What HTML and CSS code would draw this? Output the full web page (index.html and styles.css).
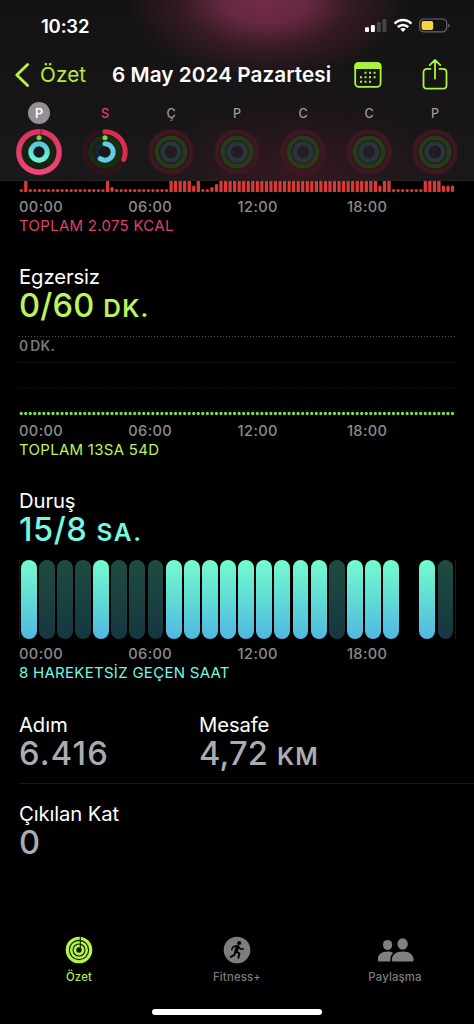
FILE: index.html
```html
<!DOCTYPE html>
<html lang="tr">
<head>
<meta charset="utf-8">
<title>Özet</title>
<link rel="stylesheet" href="styles.css">
</head>
<body>
<div class="screen">
  <header class="header">
    <div class="status">
      <span class="clock">10:32</span>
      <svg class="status-icons" width="86" height="16" viewBox="0 0 86 16">
        <g fill="#fff"><rect x="0" y="9.3" width="4" height="4.7" rx="1"/><rect x="5.9" y="7" width="4" height="7" rx="1"/></g>
        <g fill="#454547"><rect x="11.8" y="4" width="4" height="10" rx="1"/><rect x="17.4" y="1" width="4" height="13" rx="1"/></g>
        <g fill="none" stroke="#fff" stroke-width="2.5"><path d="M29.6 5.7C34.3 .9 41.7 .9 46.4 5.7"/><path d="M32.8 9.1C35.8 6.2 40.2 6.2 43.2 9.1"/></g>
        <path d="M38 14l-2.8-3C36.8 9.7 39.2 9.7 40.8 11z" fill="#fff"/>
        <rect x="54.7" y="1" width="27" height="12.8" rx="4" fill="none" stroke="#69696b" stroke-width="1.2"/>
        <rect x="56.6" y="2.9" width="11.6" height="9" rx="2" fill="#f6d442"/>
        <path d="M83.2 5.3c2 .8 2 3.5 0 4.3z" fill="#69696b"/>
      </svg>
    </div>
    <nav class="nav">
      <svg class="back-icon" width="16" height="26" viewBox="0 0 16 26"><path d="M13.6 2.5L2.8 13L13.6 23.5" fill="none" stroke="#b4f43f" stroke-width="2.9" stroke-linecap="round" stroke-linejoin="round"/></svg>
      <span class="back">Özet</span>
      <span class="date">6 May 2024 Pazartesi</span>
      <svg class="calendar" width="28" height="28" viewBox="0 0 28 28">
        <rect x="1.2" y="2.2" width="25.4" height="23.6" rx="3.6" fill="none" stroke="#aaf33f" stroke-width="1.8"/>
        <path d="M.4 8V5Q.4 1.3 4.2 1.3H23.6Q27.4 1.3 27.4 5V8z" fill="#aaf33f"/>
        <g fill="#aaf33f"><path d="M10.5 10.7h2v2h-2zM15 10.7h2v2h-2zM19.6 10.7h2v2h-2zM6 15.2h2v2H6zM10.5 15.2h2v2h-2zM15 15.2h2v2h-2zM19.6 15.2h2v2h-2zM6 19.7h2v2H6zM10.5 19.7h2v2h-2zM15 19.7h2v2h-2z"/></g>
      </svg>
      <svg class="share" width="26" height="34" viewBox="0 0 26 34">
        <path d="M8.5 10.9H5Q1.5 10.9 1.5 14.4V27.2Q1.5 30.7 5 30.7H21Q24.5 30.7 24.5 27.2V14.4Q24.5 10.9 21 10.9H17.5M13 20.5V2.2M7.7 7.2L13 1.9L18.3 7.2" fill="none" stroke="#aaf33f" stroke-width="1.8" stroke-linecap="round" stroke-linejoin="round"/>
      </svg>
    </nav>
    <div class="week" id="week"></div>
  </header>

  <main class="content">
    <section class="metric move">
      <svg class="move-chart" id="moveChart" width="474" height="11"></svg>
      <div class="hours"><span>00:00</span><span>06:00</span><span>12:00</span><span>18:00</span></div>
      <p class="total">TOPLAM 2.075 KCAL</p>
    </section>

    <section class="metric exercise">
      <h2 class="label">Egzersiz</h2>
      <p class="value">0/60 <span class="unit">DK.</span></p>
      <div class="exercise-plot">
        <svg class="lines" width="474" height="80">
          <g fill="none" stroke-dasharray="1 2"><path d="M19 .5H455" stroke="#545454"/><path d="M19 26.5H455" stroke="#272727"/><path d="M19 52.5H455" stroke="#1c1c1c"/></g>
          <path d="M21.2 77.5H454" fill="none" stroke="#79dd50" stroke-width="3.3" stroke-linecap="round" stroke-dasharray="0 4.54"/>
        </svg>
        <span class="axis">0 DK.</span>
      </div>
      <div class="hours"><span>00:00</span><span>06:00</span><span>12:00</span><span>18:00</span></div>
      <p class="total">TOPLAM 13SA 54D</p>
    </section>

    <section class="metric stand">
      <h2 class="label">Duruş</h2>
      <p class="value">15/8 <span class="unit">SA.</span></p>
      <div class="stand-chart" id="standChart"></div>
      <div class="hours"><span>00:00</span><span>06:00</span><span>12:00</span><span>18:00</span></div>
      <p class="total">8 HAREKETSİZ GEÇEN SAAT</p>
    </section>

    <section class="stats">
      <div class="stat-row">
        <div class="stat"><h2 class="label">Adım</h2><p class="value steps">6.416</p></div>
        <div class="stat"><h2 class="label">Mesafe</h2><p class="value">4,72 <span class="unit">KM</span></p></div>
      </div>
      <div class="stat-row last">
        <div class="stat"><h2 class="label">Çıkılan Kat</h2><p class="value">0</p></div>
      </div>
    </section>
  </main>

  <footer class="tabs">
    <div class="tab active">
      <svg width="28" height="28" viewBox="0 0 28 28">
        <circle cx="14" cy="14" r="13.3" fill="#b4f34b"/>
        <g fill="none" stroke="#101b00" stroke-width="1.1"><circle cx="14" cy="14" r="9.6"/><circle cx="14" cy="14" r="6"/></g>
        <circle cx="14" cy="14" r="2.7" fill="#101b00"/>
        <path d="M15.3 1v11" stroke="#101b00" stroke-width="1.1"/>
      </svg>
      <span>Özet</span>
    </div>
    <div class="tab">
      <svg width="28" height="28" viewBox="0 0 28 28">
        <circle cx="14" cy="14" r="13.3" fill="#7d7d7d"/>
        <circle cx="16.2" cy="7" r="2" fill="#000"/>
        <g fill="none" stroke="#000" stroke-linecap="round" stroke-linejoin="round"><path d="M14.6 10.5L13 15.5" stroke-width="3.4"/><path d="M14 9.8L10.2 10.7L8.7 13.7M15.6 10.8L17.4 13H20.3" stroke-width="1.5"/><path d="M13.3 15.5L16.5 17.6L15.4 21.8M12.3 16.2L11.2 19.2L7.7 20.8" stroke-width="1.9"/></g>
      </svg>
      <span>Fitness+</span>
    </div>
    <div class="tab">
      <svg width="38" height="28" viewBox="0 0 38 28">
        <g fill="#808080"><ellipse cx="11.6" cy="8.9" rx="4.6" ry="5"/><path d="M2 22.5C2 18.5 6 15.6 11.5 15.6Q15.3 15.6 17.1 17Q14.6 19.3 14.4 22.6V25.5H3Q2 25.5 2 24.5z"/><ellipse cx="26.6" cy="8" rx="5.2" ry="5.8"/><path d="M15.9 24C15.9 19 20 15.6 26.7 15.6S37.6 19 37.6 24Q37.6 25.5 36 25.5H17.3Q15.9 25.5 15.9 24z"/></g>
      </svg>
      <span>Paylaşma</span>
    </div>
  </footer>
  <div class="home-bar"></div>
</div>
<script src="charts.js"></script>
</body>
</html>
```
FILE: styles.css
```css
* { box-sizing: border-box; }
body, h2, p { margin: 0; font-weight: 400; }
body { background: #000; font-family: Inter, "Noto Sans", sans-serif; color: #fff; }
svg { display: block; flex: none; }
.screen { width: 474px; height: 1024px; display: flex; flex-direction: column; overflow: hidden; background: #000; }

.header {
  height: 181px; flex: none; overflow: hidden;
  border-bottom: 1px solid #222021;
  background:
    radial-gradient(ellipse 140px 80px at 266px 0, #742b46 0%, #652840 30%, rgba(77,31,48,.6) 60%, rgba(40,22,29,0) 100%),
    radial-gradient(ellipse 160px 75px at 295px 175px, rgba(75,24,36,.55), rgba(60,24,33,0) 100%),
    linear-gradient(#131313, #181517 60%, #19181a);
}
.status { height: 52px; display: flex; justify-content: space-between; padding: 14px 23px 0 41px; }
.clock { font-size: 18.5px; line-height: 24px; font-weight: 600; letter-spacing: -.2px; }
.status-icons { margin-top: 4px; }
.nav { height: 46px; display: flex; align-items: center; padding-left: 14px; white-space: nowrap; }
.back { width: 72px; margin-left: 10px; color: #b4ec40; font-size: 20.7px; letter-spacing: .1px; }
.date { width: 242px; font-size: 20.7px; font-weight: 600; letter-spacing: .07px; }
.back, .date { margin-top: -2px; }
.calendar { margin-right: 40px; }
.share { margin-top: -1px; }
.week { display: grid; grid-template-columns: repeat(7, 66px); padding: 4px 0 0 6px; }
.day { display: flex; flex-direction: column; align-items: center; }
.day-name { width: 22px; height: 22px; border-radius: 50%; font-size: 12.5px; font-weight: 500; line-height: 23px; text-align: center; color: #9b999b; }
.day.selected .day-name { background: #929094; color: #fff; font-weight: 600; }
.day.today .day-name { color: #e83b6b; }
.day svg { margin-top: 4px; }
.day.upcoming svg { filter: blur(.6px); }

.content { flex: 1; }
.hours { display: grid; grid-template-columns: 109.3px 109.3px 109.3px 1fr; margin-top: 6px; padding-left: 19px; height: 19px; line-height: 19px; font-size: 14.6px; font-weight: 500; letter-spacing: .4px; color: #8b8b8b; }
.total { height: 18px; padding-left: 19px; line-height: 18px; font-size: 15px; letter-spacing: .28px; white-space: nowrap; }
.label { line-height: 25px; font-size: 20.3px; letter-spacing: -.12px; }
.value { line-height: 32px; height: 32px; font-size: 32.6px; font-weight: 450; letter-spacing: .2px; white-space: nowrap; }
.unit { font-size: 24.4px; font-weight: 600; letter-spacing: 1.2px; }
.metric .label, .metric .value { padding-left: 19px; }
.move .total { color: #df416f; }
.exercise { margin-top: 29px; }
.exercise .value, .exercise .total { color: #bdf45a; }
.exercise-plot { margin-top: 15px; height: 80px; display: grid; }
.lines, .axis { grid-area: 1 / 1; }
.axis { padding-left: 19px; font-size: 13.8px; font-weight: 600; line-height: 21px; letter-spacing: .3px; color: #777; word-spacing: -2px; }
.stand { margin-top: 29px; }
.stand .value, .stand .total { color: #75f8e2; }
.stand .value { letter-spacing: .5px; }
.stand .unit { letter-spacing: 1.7px; }
.stand-chart { margin: 15px 0 0 19px; width: 437px; height: 79px; display: grid; grid-template-columns: repeat(24, 18.13px); padding-left: .7px; border-left: 1px dotted #243635; border-right: 1px dotted #243635; }
.hour { width: 15.9px; height: 79px; border-radius: 8px; }
.hour.active { background: linear-gradient(#75fbd0, #62dfd4 45%, #51b7e2); }
.hour.idle { background: linear-gradient(#1e4c40, #1b4240 45%, #153742); }

.stats { margin-top: 30px; }
.stat-row { display: grid; grid-template-columns: 180px 1fr; height: 72px; margin-left: 19px; border-bottom: 1px solid #171718; }
.stat-row.last { border: 0; padding-top: 17px; }
.stats .value { color: #abacb1; }
.stats .value.steps { letter-spacing: 1.2px; }

.tabs { height: 72px; flex: none; display: grid; grid-template-columns: repeat(3, 158px); color: #7d7d7d; }
.tab { display: flex; flex-direction: column; align-items: center; font-size: 11.3px; line-height: 16px; font-weight: 500; letter-spacing: .2px; }
.tab svg { margin-top: -1px; }
.tab span { margin-top: 5px; }
.tab.active { color: #b4ee4b; }
.home-bar { width: 170px; height: 6px; flex: none; margin: 0 auto 9px; border-radius: 3px; background: #fff; }
```
FILE: charts.js
```js
// Activity rings for each day of the week
const days = [
  { name: "P", state: "selected" }, { name: "S", state: "today" },
  { name: "Ç" }, { name: "P" }, { name: "C" }, { name: "C" }, { name: "P" }
];
const ring = (r, w, color, extra = "") =>
  `<circle cx="24" cy="24" r="${r}" fill="none" stroke="${color}" stroke-width="${w}" ${extra}/>`;
const arc = (r, w, color, part) =>
  ring(r, w, color, `pathLength="100" stroke-dasharray="${part} 100" stroke-linecap="round" transform="rotate(-90 24 24)"`);
const defs = `<defs>
  <linearGradient id="pink" x1="0" y1="0" x2="0" y2="1"><stop stop-color="#d93462"/><stop offset="1" stop-color="#f24478"/></linearGradient>
  <linearGradient id="mint" x1="0" y1="0" x2="0" y2="1"><stop stop-color="#57c8df"/><stop offset="1" stop-color="#70f2cf"/></linearGradient>
  </defs>`;
const dot = `<circle cx="24" cy="9.7" r="2.5" fill="#75d943"/>`;
document.getElementById("week").innerHTML = days.map(d => {
  let rings;
  if (d.state === "selected") {
    rings = defs + ring(20.2, 5.4, "url(#pink)") + `<path d="M25 1.4q2.6 2.5 0 5" fill="none" stroke="#8c1b3d" stroke-width="1.2"/>` +
      ring(14.2, 5, "#142410") + ring(8.2, 5.1, "url(#mint)") + dot;
  } else if (d.state === "today") {
    rings = ring(20.2, 5, "#30121a") + arc(20.2, 5, "#d92f4c", 31) + ring(14.2, 5, "#16300f") +
      ring(8.2, 5, "#14262f") + arc(8.2, 5, "#65cbe0", 60) + dot;
  } else {
    rings = ring(20.2, 5, "#3d1820") + ring(14.2, 4.7, "#293a1b") + ring(8.4, 4.8, "#27353c") + `<circle cx="24" cy="24" r="5" fill="#251d25"/>`;
  }
  return `<div class="day ${d.state || "upcoming"}"><span class="day-name">${d.name}</span><svg width="48" height="48">${rings}</svg></div>`;
}).join("");

// Calories for every quarter of an hour, in pixels of bar height
const move = Array.from({ length: 96 }, (_, i) => {
  if (i === 1 || i === 19) return 11;
  if (i === 20 || i === 42) return 5;
  if (i === 38 || i === 79) return 6.5;
  if (i === 43) return 8;
  if (i >= 93) return 6.5;
  if ((i >= 33 && i <= 39) || (i >= 44 && i <= 81) || i >= 89) return 11;
  return 3;
});
document.getElementById("moveChart").innerHTML = move.map((h, i) =>
  `<rect x="${(19.6 + i * 4.54).toFixed(2)}" y="${11 - h}" width="3.3" height="${h}" rx="${h < 11 ? 1.5 : .5}" fill="#db3935"/>`).join("");

// Standing hours: 1 active, 0 idle, - no data
document.getElementById("standChart").innerHTML = [..."100010001111111110111-10"].map(c =>
  `<span class="hour ${c === "1" ? "active" : c === "0" ? "idle" : ""}"></span>`).join("");
```
